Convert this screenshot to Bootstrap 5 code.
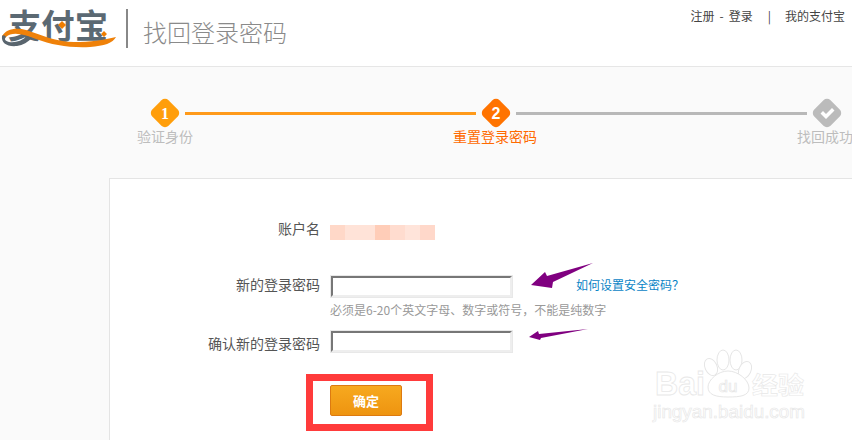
<!DOCTYPE html>
<html lang="zh-CN">
<head>
<meta charset="utf-8">
<title>找回登录密码</title>
<link href="https://cdn.jsdelivr.net/npm/bootstrap@5.3.0/dist/css/bootstrap.min.css" rel="stylesheet">
<style>
html,body{height:440px;width:852px;overflow:hidden}
body{position:relative;background:#fafafa;font-family:"Liberation Sans","Noto Sans CJK SC",sans-serif;font-size:12px;color:#555}
.top-bar{height:67px;background:#fff;border-bottom:1px solid #e6e6e6}
.logo-box{width:118px;height:60px;flex:none}
.logo-word{font-family:"Noto Sans CJK SC",sans-serif;font-weight:700;font-size:33px;fill:#5b6973}
.logo-rule{width:2px;height:39px;background:#888;margin:9px 15px 0 8px}
.page-name{font-size:24px;line-height:28px;margin-top:18px;color:#8a8a8a;font-weight:300;font-family:"Noto Sans CJK SC",sans-serif}
.top-links{margin:9px 7px 0 auto;line-height:14px;color:#444;font-family:"Noto Sans CJK SC",sans-serif;font-weight:400}
.link-dash{margin:0 5px 0 5px}
.top-sep{margin:0 14px 0 15px}
.step-track{padding:31px 0 0 150px;height:60px}
.step-mark{width:30px;height:30px;flex:none}
.step-num{font-size:16px;font-weight:700;fill:#fff;text-anchor:middle}
.step-line{width:291px;height:3px;margin:14px 5px 0 5px;flex:none}
.line-done{background:#ff9a1a}
.line-todo{background:#b8b8b8}
.step-names{width:990px;height:51px}
.step-name{width:330px;flex:none;text-align:center;font-size:14px;line-height:18px;color:#bdbdbd;font-family:"Noto Sans CJK SC",sans-serif;font-weight:400}
.step-now{color:#ff6a00}
.form-sheet{margin-left:109px;height:262px;background:#fff;border-left:1px solid #e4e4e4;border-top:1px solid #e4e4e4;padding-top:41px}
.field-name{width:210px;flex:none;text-align:right;font-size:14px;line-height:16px;margin-right:10px;color:#555;font-family:"Noto Sans CJK SC",sans-serif;font-weight:400}
.field-low{margin-top:4px}
.mask-strip{height:15px;margin-top:5px}
.mask-cell{width:15px;height:15px}
.tone-a{background:#ffd8c8}.tone-b{background:#ffe3d8;width:30px}.tone-c{background:#ffcdb8}.tone-d{background:#ffdccf}.tone-e{background:#ffe4da}.tone-f{background:#ffd8ca}
.pw-row{margin-top:36px}
.pw-frame{border:1px solid #e8e8e8;padding:0;width:183px;height:23px;margin-top:-1px;flex:none}
.pw-input{display:block;width:181px;height:21px;border:2px solid #eee;border-top-color:#777;border-left-color:#777;background:#fff;padding:0;outline:0;border-radius:0}
.help-link{margin:-1px 0 0 63px;font-size:12px;line-height:20px;color:#0a84c6;text-decoration:none;font-family:"Noto Sans CJK SC",sans-serif}
.hint-row{margin:3px 0 0 220px;line-height:18px;color:#999;font-family:"Noto Sans CJK SC",sans-serif;font-weight:400}
.again-row{margin-top:12px}
.mark-box{width:127px;height:57px;border:7px solid #ff3b3b;margin:21px 0 0 196px;padding:4px 0 0 17px}
.go-btn{display:block;width:72px;height:31px;padding:0;border:1px solid #dd7a10;border-radius:2px;background:linear-gradient(#f7a91f,#ee9410);color:#fff;font-weight:700;font-size:13px;font-family:"Noto Sans CJK SC",sans-serif}
.go-btn:hover{color:#fff;background:#ee9410;border-color:#dd7a10}
.arrow-layer{position:absolute;left:520px;top:255px;width:80px;height:95px}
.wm-layer{position:absolute;left:640px;top:340px;width:212px;height:100px}
.wm-big{font:700 33px "Liberation Sans",sans-serif;fill:#fff;stroke:#e8e8e8;stroke-width:.8}
.wm-cn{font:700 24px "Noto Sans CJK SC",sans-serif;fill:#fff;stroke:#e8e8e8;stroke-width:.6}
.wm-url{font:400 17.500px "Liberation Sans",sans-serif;fill:#fff;stroke:#e6e6e6;stroke-width:.6}
.wm-du{font:400 17px "Liberation Sans",sans-serif;fill:#fff;stroke:#e6e6e6;stroke-width:.7;text-anchor:middle}
</style>
</head>
<body>
<header class="top-bar d-flex">
  <svg class="logo-box" viewBox="0 0 118 60" aria-label="支付宝">
    <text class="logo-word" x="8" y="38" textLength="100" lengthAdjust="spacingAndGlyphs">支付宝</text>
    <path d="M2 36C6 29 16 27 26 30C42 35 56 42 74 42C90 42 104 40 116 37C113 43 104 46 90 47C70 48 52 45 36 39C24 34 12 31 6 37C4 39 3 38 2 36Z" fill="#ef8109"/>
    <path d="M2 36C1 43 7 47 17 46C23 45 28 42 32 38L27 36C22 41 15 43 9 42C5 41 4 39 6 37C5 35 3 35 2 36Z" fill="#59656e"/>
    <path d="M58 25l4-4 4 4-4 4zM101 34l3-3 3 3-3 3z" fill="#ef7d00"/>
  </svg>
  <div class="logo-rule"></div>
  <div class="page-name">找回登录密码</div>
  <nav class="top-links d-flex">
    <span>注册</span><span class="link-dash">-</span><span>登录</span><span class="top-sep">|</span><span>我的支付宝</span>
  </nav>
</header>

<div class="step-track d-flex">
  <svg class="step-mark" viewBox="0 0 30 30"><rect x="3.500" y="3.500" width="23" height="23" rx="5" transform="rotate(45 15 15)" fill="#ff9e0b"/><text class="step-num" x="15" y="21" font-family="Liberation Serif">1</text></svg>
  <div class="step-line line-done"></div>
  <svg class="step-mark" viewBox="0 0 30 30"><rect x="3.500" y="3.500" width="23" height="23" rx="5" transform="rotate(45 15 15)" fill="#ff7300"/><text class="step-num" x="15" y="21" font-family="Liberation Sans">2</text></svg>
  <div class="step-line line-todo"></div>
  <svg class="step-mark" viewBox="0 0 30 30"><rect x="3.500" y="3.500" width="23" height="23" rx="5" transform="rotate(45 15 15)" fill="#bbb"/><path d="M8.500 15.500l2.500-2.500 3 3 6-6 2.500 2.500-8.500 8.500z" fill="#fff"/></svg>
</div>
<div class="step-names d-flex">
  <div class="step-name">验证身份</div>
  <div class="step-name step-now">重置登录密码</div>
  <div class="step-name">找回成功</div>
</div>

<main class="form-sheet">
  <div class="d-flex">
    <div class="field-name">账户名</div>
    <div class="mask-strip d-flex">
      <div class="mask-cell tone-a"></div><div class="mask-cell tone-b"></div><div class="mask-cell tone-c"></div><div class="mask-cell tone-d"></div><div class="mask-cell tone-e"></div><div class="mask-cell tone-f"></div>
    </div>
  </div>
  <div class="pw-row d-flex">
    <div class="field-name">新的登录密码</div>
    <div class="pw-frame"><input class="pw-input" type="password"></div>
    <a class="help-link" href="#">如何设置安全密码？</a>
  </div>
  <div class="hint-row">必须是6-20个英文字母、数字或符号，不能是纯数字</div>
  <div class="again-row d-flex">
    <div class="field-name field-low">确认新的登录密码</div>
    <div class="pw-frame"><input class="pw-input" type="password"></div>
  </div>
  <div class="mark-box"><button class="btn go-btn" type="button">确定</button></div>
</main>

<svg class="arrow-layer" viewBox="0 0 80 95">
  <path d="M11 30L25 17L27 21L73 8L33 27L32 33Z" fill="#800080"/>
  <path d="M9 82L18 76L19 79L68 74L21 83L20 85Z" fill="#800080"/>
</svg>

<svg class="wm-layer" viewBox="0 0 212 100">
  <g fill="#fff" stroke="#e6e6e6" stroke-width="1">
    <ellipse cx="71" cy="27" rx="6" ry="9" transform="rotate(-25 71 27)"/>
    <ellipse cx="83" cy="20" rx="6" ry="10"/>
    <ellipse cx="96" cy="20" rx="6" ry="10"/>
    <ellipse cx="105" cy="30" rx="6" ry="9" transform="rotate(25 105 30)"/>
    <path d="M88 31C98 31 109 40 109 48C109 56 100 57 88 57C76 57 68 55 68 47C68 40 78 31 88 31Z"/>
  </g>
  <text class="wm-big" x="15" y="55" textLength="50" lengthAdjust="spacingAndGlyphs">Bai</text>
  <text class="wm-du" x="88" y="52">du</text>
  <text class="wm-cn" x="112" y="54" textLength="52" lengthAdjust="spacingAndGlyphs">经验</text>
  <text class="wm-url" x="13" y="78" textLength="152" lengthAdjust="spacingAndGlyphs">jingyan.baidu.com</text>
</svg>
<script src="https://cdn.jsdelivr.net/npm/bootstrap@5.3.0/dist/js/bootstrap.bundle.min.js"></script>
</body>
</html>
